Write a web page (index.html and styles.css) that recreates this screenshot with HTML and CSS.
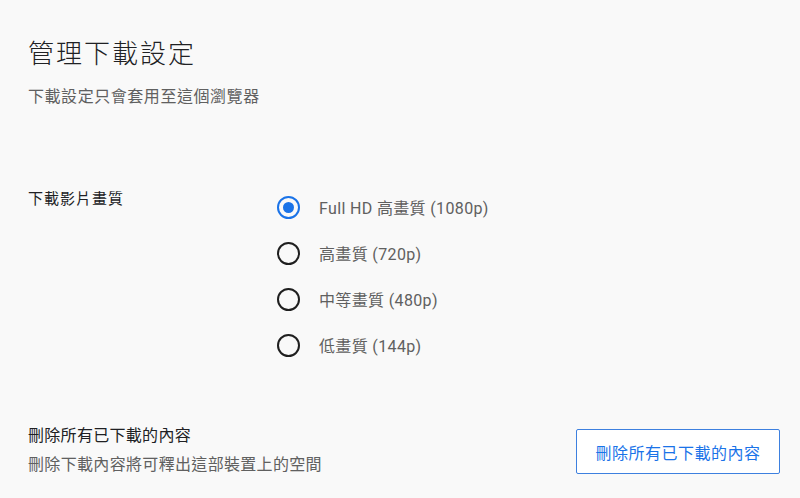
FILE: index.html
```html
<!DOCTYPE html>
<html>
<head>
  <meta charset="UTF-8">
  <title>管理下載設定</title>
  <link rel="stylesheet" href="styles.css">
</head>
<body>
  <div class="page">
    <h1 class="title">管理下載設定</h1>
    <p class="subtitle">下載設定只會套用至這個瀏覽器</p>

    <div class="quality">
      <div class="quality-label">下載影片畫質</div>
      <div class="options">
        <label class="option"><span class="radio on"></span><span class="option-text">Full HD 高畫質 (1080p)</span></label>
        <label class="option"><span class="radio"></span><span class="option-text">高畫質 (720p)</span></label>
        <label class="option"><span class="radio"></span><span class="option-text">中等畫質 (480p)</span></label>
        <label class="option"><span class="radio"></span><span class="option-text">低畫質 (144p)</span></label>
      </div>
    </div>

    <div class="delete-row">
      <div class="delete-info">
        <div class="delete-title">刪除所有已下載的內容</div>
        <div class="delete-desc">刪除下載內容將可釋出這部裝置上的空間</div>
      </div>
      <button class="delete-btn">刪除所有已下載的內容</button>
    </div>
  </div>
</body>
</html>
```

FILE: styles.css
```css
* {
  margin: 0;
  padding: 0;
  box-sizing: border-box;
}
html, body {
  background: #f9f9f9;
}
body {
  font-family: Roboto, "Noto Sans CJK TC", sans-serif;
  color: #202124;
}
.page {
  padding: 37px 20px 0 28px;
}
.title {
  font-size: 26px;
  font-weight: 300;
  line-height: 34px;
  letter-spacing: 2px;
  color: #202124;
}
.subtitle {
  margin-top: 15px;
  font-size: 16px;
  line-height: 22px;
  letter-spacing: 0.55px;
  color: #606060;
}
.quality {
  display: flex;
  margin-top: 80px;
}
.quality-label {
  width: 249px;
  font-size: 15px;
  line-height: 22px;
  letter-spacing: 1px;
  color: #202124;
}
.options {
  display: flex;
  flex-direction: column;
  gap: 24px;
  padding-top: 8px;
}
.option {
  display: flex;
  align-items: center;
  height: 22px;
}
.radio {
  width: 23px;
  height: 23px;
  border: 2px solid #1f1f1f;
  border-radius: 50%;
  display: flex;
  align-items: center;
  justify-content: center;
}
.radio.on {
  border-color: #1a73e8;
}
.radio.on::after {
  content: "";
  width: 11px;
  height: 11px;
  border-radius: 50%;
  background: #1a73e8;
}
.option-text {
  margin-left: 19px;
  font-size: 16px;
  letter-spacing: 0.35px;
  color: #606060;
}
.delete-row {
  display: flex;
  justify-content: space-between;
  align-items: center;
  margin-top: 69px;
}
.delete-title {
  font-size: 16px;
  line-height: 22px;
  letter-spacing: 0.3px;
  color: #202124;
}
.delete-desc {
  margin-top: 7px;
  font-size: 16px;
  line-height: 22px;
  letter-spacing: 0.33px;
  color: #606060;
}
.delete-btn {
  width: 204px;
  height: 45px;
  background: #fff;
  border: 1px solid #3d80df;
  border-radius: 2px;
  font-family: Roboto, "Noto Sans CJK TC", sans-serif;
  font-size: 16px;
  letter-spacing: 0.5px;
  color: #1a73e8;
  margin-top: 2px;
}
```
